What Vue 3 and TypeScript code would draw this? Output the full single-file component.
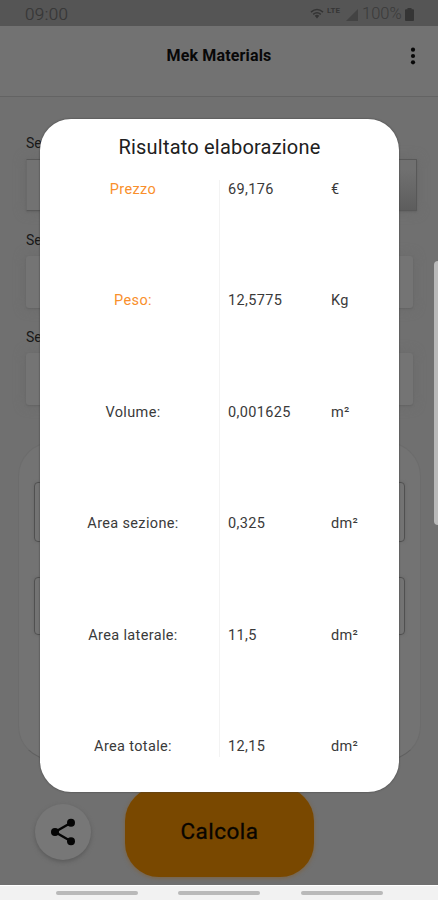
<script setup lang="ts">
interface ResultRow {
  label: string
  value: string
  unit: string
  accent?: boolean
}

const rows: ResultRow[] = [
  { label: 'Prezzo', value: '69,176', unit: '€', accent: true },
  { label: 'Peso:', value: '12,5775', unit: 'Kg', accent: true },
  { label: 'Volume:', value: '0,001625', unit: 'm²' },
  { label: 'Area sezione:', value: '0,325', unit: 'dm²' },
  { label: 'Area laterale:', value: '11,5', unit: 'dm²' },
  { label: 'Area totale:', value: '12,15', unit: 'dm²' },
]

const selectors = [0, 1, 2]
</script>

<template>
  <div class="screen">
    <header class="status">
      <span class="clock">09:00</span>
      <div class="indicators">
        <svg class="wifi" width="14" height="11" viewBox="0 0 14 11">
          <path d="M1 4.1Q7-1 13 4.1M3.2 6.3Q7 3.2 10.8 6.3" fill="none" stroke="#343434" stroke-width="1.5" />
          <path d="M4.7 7.7Q7 6 9.3 7.7L7 10.5Z" fill="#343434" />
        </svg>
        <span class="lte">LTE</span>
        <svg class="signal" width="12" height="12" viewBox="0 0 13 13"><path d="M13 0V13H0Z" fill="#434343" /></svg>
        <span class="percent">100%</span>
        <svg class="battery" width="9" height="13" viewBox="0 0 9 13"><path d="M2.5 0H6.5V1.3H8Q9 1.3 9 2.3V12Q9 13 8 13H1Q0 13 0 12V2.3Q0 1.3 1 1.3H2.5Z" fill="#353535" /></svg>
      </div>
    </header>

    <div class="appbar">
      <h1>Mek Materials</h1>
      <svg class="more" width="6" height="18" viewBox="0 0 6 18">
        <circle cx="3" cy="2.7" r="2.1" /><circle cx="3" cy="9" r="2.1" /><circle cx="3" cy="15.3" r="2.1" />
      </svg>
    </div>

    <main class="form">
      <div v-for="s in selectors" :key="s" class="group">
        <label>Se</label>
        <div class="select" :class="{ first: s === 0 }"></div>
      </div>
      <section class="card">
        <div class="input"></div>
        <div class="input lower"></div>
      </section>
    </main>

    <div class="actions">
      <button class="share" aria-label="Condividi">
        <svg width="24" height="28" viewBox="0 0 24 28">
          <path d="M20 4.8L4 14L20 23.2" fill="none" stroke="#050505" stroke-width="2.4" />
          <circle cx="20" cy="4.8" r="4" /><circle cx="4" cy="14" r="4" /><circle cx="20" cy="23.2" r="4" />
        </svg>
      </button>
      <button class="calc">Calcola</button>
    </div>

    <footer class="nav"><i></i><i></i><i></i></footer>

    <div class="edge"></div>

    <div class="dialog" role="dialog">
      <h2>Risultato elaborazione</h2>
      <div class="results">
        <div class="labels">
          <span v-for="r in rows" :key="r.label" :class="{ accent: r.accent }">{{ r.label }}</span>
        </div>
        <div class="values">
          <div v-for="r in rows" :key="r.label" class="value"><span>{{ r.value }}</span><span>{{ r.unit }}</span></div>
        </div>
      </div>
    </div>
  </div>
</template>

<style>
body { margin: 0; }
</style>

<style scoped>
* { box-sizing: border-box; }
.screen {
  position: relative;
  display: flex;
  flex-direction: column;
  width: 438px;
  height: 900px;
  overflow: hidden;
  background: #707070;
  font-family: Roboto, "Liberation Sans", sans-serif;
  color: #111;
}
.status {
  display: flex;
  justify-content: space-between;
  height: 26px;
  padding: 2px 24px 0 25px;
  background: #555;
  color: #363636;
}
.clock { font-size: 17px; font-weight: 300; line-height: 24px; letter-spacing: 0.4px; -webkit-text-stroke: 0.2px #363636; }
.indicators { display: flex; align-items: center; }
.wifi { margin-bottom: 2px; }
.lte { margin: -7px 0 0 3px; font-size: 8px; font-weight: 700; }
.signal { margin: 2px 0 0 6px; }
.percent { width: 41px; margin-left: 4px; font-size: 16.5px; font-weight: 300; line-height: 24px; white-space: nowrap; color: #3a3a3a; }
.battery { margin-left: 2px; }
.appbar {
  position: relative;
  display: flex;
  align-items: center;
  justify-content: center;
  height: 71px;
  padding-bottom: 10px;
  background: #727272;
  border-bottom: 1px solid #636363;
}
h1 { margin: 0; font-size: 16px; font-weight: 700; line-height: 20px; letter-spacing: 0.15px; color: #080808; }
.more { position: absolute; right: 22px; top: 21px; fill: #080808; }
.form { flex: 1; padding: 35px 17px 0 18px; }
.group { height: 97px; padding: 0 8px; }
.group:nth-child(3) { height: 95px; }
.group label { display: block; height: 27px; font-size: 14px; line-height: 22px; color: #181818; }
.select {
  width: 387px;
  height: 52px;
  background: #747474;
  border-radius: 3px;
  box-shadow: 0 1px 2px #636363, 0 0 12px #6b6b6b;
}
.select.first {
  width: 391px;
  border: 1px solid #585858;
  border-left-color: #6a6a6a;
  border-radius: 1px;
  background: linear-gradient(90deg, #727272 15%, transparent 80%), linear-gradient(#707070 20%, #5d5d5d);
}
.card {
  height: 318px;
  margin-top: 21px;
  padding: 39px 15px 0;
  background: #737373;
  border: 1px solid #6c6c6c;
  border-bottom-color: #606060;
  border-radius: 34px;
}
.input { height: 60px; border: 1px solid #505050; border-radius: 4px; box-shadow: 0 0 3px #686868; }
.input.lower { height: 58px; margin-top: 35px; }
.actions { display: flex; align-items: flex-start; height: 98px; padding: 0 0 0 35px; }
button { border: 0; padding: 0; font-family: inherit; }
.share {
  display: flex;
  align-items: center;
  justify-content: center;
  width: 56px;
  height: 56px;
  margin-top: 17px;
  border-radius: 50%;
  background: #777;
  box-shadow: 0 2px 4px #5a5a5a;
  fill: #050505;
}
.calc {
  width: 189px;
  height: 90px;
  margin-left: 34px;
  padding-bottom: 2px;
  border-radius: 34px;
  background: #794800;
  box-shadow: 0 1px 4px #7c6240;
  color: #080500;
  font-size: 22.5px;
  font-weight: 400;
  letter-spacing: 0.5px;
  -webkit-text-stroke: 0.3px #080500;
}
.nav {
  display: flex;
  justify-content: center;
  gap: 40.5px;
  height: 15px;
  padding-top: 5px;
  background: #f2f2f2;
  border-top: 1px solid #fff;
}
.nav i { width: 82px; height: 4px; border-radius: 2px; background: #b9b9b9; }
.edge { position: absolute; top: 261px; right: 0; width: 4px; height: 264px; border-radius: 4px 0 0 4px; background: #b9b9b9; }
.dialog {
  position: absolute;
  left: 40px;
  top: 119px;
  width: 359px;
  height: 673px;
  padding-top: 16px;
  border-radius: 31px;
  background: #fff;
  box-shadow: 0 0 2px #3c3c3c;
}
h2 { margin: 0; font-size: 20px; font-weight: 400; line-height: 25px; text-align: center; color: #202020; letter-spacing: 0.2px; }
.results { display: flex; height: 577px; margin-top: 20px; font-size: 14.5px; line-height: 20px; letter-spacing: 0.35px; color: #3a3a3a; }
.labels, .values { display: flex; flex-direction: column; justify-content: space-between; }
.labels { width: 179px; padding-left: 7px; text-align: center; }
.accent { color: #f98f2c; }
.values { flex: 1; border-left: 1px solid #f3f3f3; }
.value { display: grid; grid-template-columns: 103px 1fr; padding-left: 8px; }
</style>
